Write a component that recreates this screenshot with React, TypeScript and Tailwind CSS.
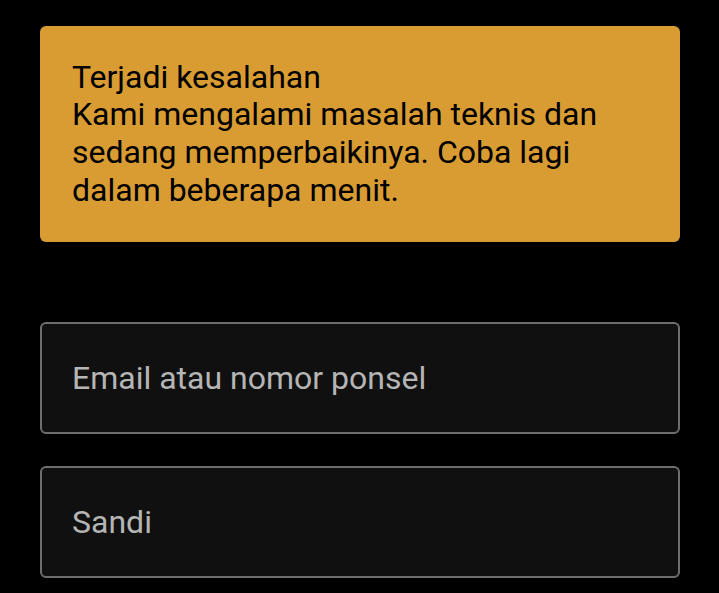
export default function App() {
  return (
    <div className="min-h-screen w-full bg-black pl-10 pt-[26px] font-['Roboto',sans-serif]">
      {/* Error banner */}
      <div className="w-[640px] rounded-md bg-[#d89c33] px-8 py-[32.5px] text-[32px] leading-[37.75px] text-black">
        <div>Terjadi kesalahan</div>
        <div>Kami mengalami masalah teknis dan sedang memperbaikinya. Coba lagi dalam beberapa menit.</div>
      </div>

      {/* Login fields */}
      <div className="mt-20 flex w-[640px] flex-col gap-8">
        <input
          className="h-[112px] w-full rounded-md border-2 border-[#6e6e6e] bg-[#101010] px-[30px] text-[32px] text-white outline-none placeholder:text-[#b5b5b5]"
          placeholder="Email atau nomor ponsel"
        />
        <input
          type="password"
          className="h-[112px] w-full rounded-md border-2 border-[#6e6e6e] bg-[#101010] px-[30px] text-[32px] text-white outline-none placeholder:text-[#b5b5b5]"
          placeholder="Sandi"
        />
      </div>
    </div>
  );
}
